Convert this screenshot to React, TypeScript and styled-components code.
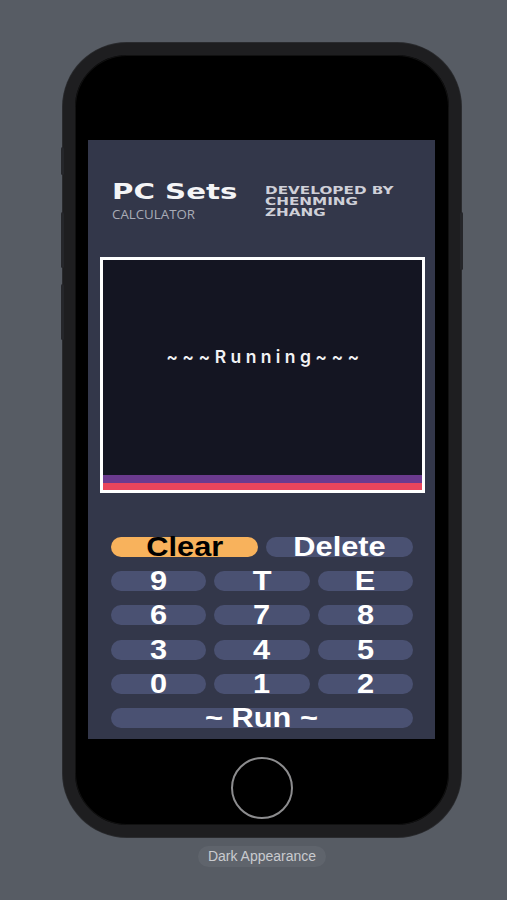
import styled, { createGlobalStyle } from "styled-components"

const GlobalStyle = createGlobalStyle`
    html, body {
        margin: 0;
        padding: 0;
        background: #575c64;
    }
    * {
        box-sizing: border-box;
    }
`

const Page = styled.div`
    width: 507px;
    height: 900px;
    display: flex;
    flex-direction: column;
    align-items: center;
    padding: 43px 0 0 17px;
    overflow: hidden;
`

const Phone = styled.div`
    position: relative;
    width: 398px;
    height: 794px;
    border: 12px solid #1e1e20;
    border-radius: 64px;
    background: #000;
    box-shadow: inset 0 0 0 1px #111, 0 0 0 1px #2a2b2e;
    display: flex;
    flex-direction: column;
    align-items: center;
    padding: 85px 14px 0 13px;
`

const SideKey = styled.span<{ $side: "left" | "right"; $top: number; $h: number }>`
    position: absolute;
    top: ${p => p.$top}px;
    ${p => (p.$side === "left" ? "left: -14px;" : "right: -14px;")}
    width: 3px;
    height: ${p => p.$h}px;
    background: #25262a;
    border-radius: 2px;
`

const Screen = styled.div`
    width: 347px;
    height: 599px;
    background: #33374a;
    display: flex;
    flex-direction: column;
`

const Header = styled.div`
    display: flex;
    padding: 41px 0 0 24px;
    height: 117px;
`

const TitleBlock = styled.div`
    width: 153px;
    display: flex;
    flex-direction: column;
`

const Title = styled.span`
    display: inline-block;
    font-family: "DejaVu Sans", sans-serif;
    font-weight: 700;
    font-size: 22px;
    line-height: 22px;
    color: #f4f4f6;
    transform: scaleX(1.33);
    transform-origin: left;
    white-space: nowrap;
`

const Subtitle = styled.span`
    margin-top: 3px;
    font-family: "Open Sans", sans-serif;
    font-size: 13.3px;
    line-height: 16px;
    color: #a9abb6;
`

const Credit = styled.div`
    margin-top: 4px;
    font-family: "DejaVu Sans", sans-serif;
    font-weight: 700;
    font-size: 10.5px;
    line-height: 11px;
    color: #cfd0d8;
    transform: scaleX(1.45);
    transform-origin: left top;
    white-space: nowrap;
`

const Display = styled.div`
    margin-left: 12px;
    width: 325px;
    height: 236px;
    border: 3px solid #ffffff;
    background: #141522;
    display: flex;
    flex-direction: column;
`

const Output = styled.div`
    flex: 1;
    display: flex;
    justify-content: center;
    padding: 87px 0 0 5px;
    font-family: Inter, sans-serif;
    font-weight: 600;
    font-size: 17.5px;
    line-height: 20px;
    letter-spacing: 4.4px;
    color: #f2f2f4;
`

const Stripe = styled.div<{ $color: string; $h: number }>`
    height: ${p => p.$h}px;
    background: ${p => p.$color};
`

const Keypad = styled.div`
    margin: 44px 0 0 23px;
    width: 302px;
    display: grid;
    grid-template-columns: repeat(6, 1fr);
    column-gap: 8px;
    row-gap: 14.2px;
`

const Key = styled.button<{ $span: number; $accent?: boolean }>`
    grid-column: span ${p => p.$span};
    height: 20px;
    border: none;
    padding: 0;
    border-radius: 10px;
    background: ${p => (p.$accent ? "#f8b25c" : "#4a5172")};
    color: ${p => (p.$accent ? "#000" : "#fff")};
    font-family: "Liberation Sans", Arial, sans-serif;
    font-weight: 700;
    font-size: 27px;
    line-height: 20px;
    white-space: nowrap;
    overflow: visible;
    display: flex;
    justify-content: center;
    align-items: flex-start;
`

const KeyLabel = styled.span`
    display: block;
    line-height: 20px;
    height: 20px;
    transform: scaleX(1.14);
`

const HomeButton = styled.div`
    margin-top: 18px;
    width: 62px;
    height: 62px;
    border-radius: 50%;
    border: 2px solid #8c8c8e;
`

const Caption = styled.div`
    margin-top: 9px;
    padding: 0 10px;
    height: 21px;
    border-radius: 11px;
    background: #5f646c;
    font-family: "Liberation Sans", Arial, sans-serif;
    font-size: 14px;
    line-height: 21px;
    color: #c9cbcf;
`

const rows = [
    ["9", "T", "E"],
    ["6", "7", "8"],
    ["3", "4", "5"],
    ["0", "1", "2"],
]

const App = () => {
    return (
        <Page>
            <GlobalStyle />
            <Phone>
                <SideKey $side="left" $top={92} $h={28} />
                <SideKey $side="left" $top={157} $h={56} />
                <SideKey $side="left" $top={229} $h={56} />
                <SideKey $side="right" $top={157} $h={58} />
                <Screen>
                    <Header>
                        <TitleBlock>
                            <Title>PC Sets</Title>
                            <Subtitle>CALCULATOR</Subtitle>
                        </TitleBlock>
                        <Credit>
                            DEVELOPED BY
                            <br />
                            CHENMING
                            <br />
                            ZHANG
                        </Credit>
                    </Header>
                    <Display>
                        <Output>~~~Running~~~</Output>
                        <Stripe $color="#6b3a8e" $h={8} />
                        <Stripe $color="#e9455c" $h={7} />
                    </Display>
                    <Keypad>
                        <Key $span={3} $accent>
                            <KeyLabel>Clear</KeyLabel>
                        </Key>
                        <Key $span={3}>
                            <KeyLabel>Delete</KeyLabel>
                        </Key>
                        {rows.flat().map(k => (
                            <Key key={k} $span={2}>
                                <KeyLabel>{k}</KeyLabel>
                            </Key>
                        ))}
                        <Key $span={6}>
                            <KeyLabel>~ Run ~</KeyLabel>
                        </Key>
                    </Keypad>
                </Screen>
                <HomeButton />
            </Phone>
            <Caption>Dark Appearance</Caption>
        </Page>
    )
}

export default App
